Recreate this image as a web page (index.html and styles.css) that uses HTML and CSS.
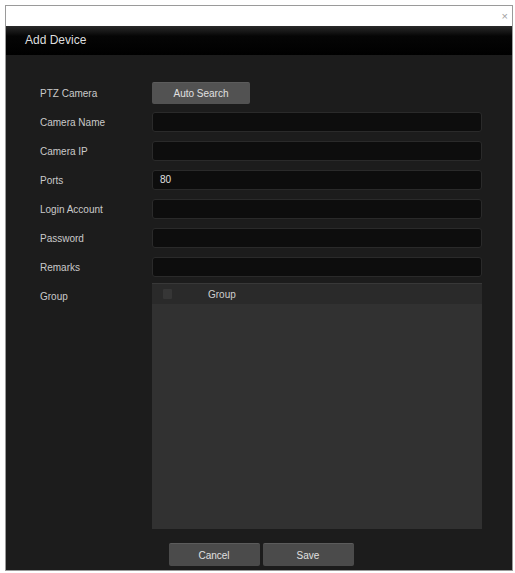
FILE: index.html
```html
<!DOCTYPE html>
<html>
<head>
<meta charset="utf-8">
<link rel="stylesheet" href="styles.css">
</head>
<body>
<div class="window">
  <div class="titlebar"><span class="close">×</span></div>
  <div class="header">Add Device</div>
  <div class="content">
    <div class="form">
      <div class="row row-btn">
        <span class="label">PTZ Camera</span>
        <button class="btn btn-search">Auto Search</button>
      </div>
      <div class="row"><span class="label">Camera Name</span><div class="input"></div></div>
      <div class="row"><span class="label">Camera IP</span><div class="input"></div></div>
      <div class="row"><span class="label">Ports</span><div class="input">80</div></div>
      <div class="row"><span class="label">Login Account</span><div class="input"></div></div>
      <div class="row"><span class="label">Password</span><div class="input"></div></div>
      <div class="row"><span class="label">Remarks</span><div class="input"></div></div>
      <div class="row row-tree">
        <span class="label label-tree">Group</span>
        <div class="tree">
          <div class="tree-head"><span class="check"></span><span class="tree-title">Group</span></div>
          <div class="tree-body"></div>
        </div>
      </div>
    </div>
    <div class="actions">
      <button class="btn btn-action">Cancel</button>
      <button class="btn btn-action">Save</button>
    </div>
  </div>
</div>
</body>
</html>
```
FILE: styles.css
```css
html, body {
  margin: 0;
  padding: 0;
  background: #ffffff;
  font-family: "Liberation Sans", Arial, sans-serif;
}
.window {
  position: relative;
  margin: 5px 0 0 5px;
  width: 506px;
  height: 564px;
  border: 1px solid #9a9a9a;
  display: flex;
  flex-direction: column;
  background: #1c1c1c;
}
.titlebar {
  height: 20px;
  background: #ffffff;
  display: flex;
  justify-content: flex-end;
  align-items: center;
  padding-right: 4px;
}
.close {
  color: #a0a0a0;
  font-size: 11px;
  line-height: 11px;
}
.header {
  height: 29px;
  background: linear-gradient(#2a2a2a 0%, #050505 35%, #000 100%);
  color: #dedede;
  font-size: 12px;
  line-height: 29px;
  padding-left: 19px;
}
.content {
  flex: 1;
  display: flex;
  flex-direction: column;
  padding: 27px 0 0 0;
}
.form {
  display: flex;
  flex-direction: column;
  gap: 9px;
  padding-left: 34px;
  padding-right: 30px;
}
.row {
  display: flex;
  align-items: center;
}
.label {
  width: 112px;
  flex: none;
  color: #cacaca;
  font-size: 10px;
}
.btn {
  border: none;
  border-top: 1px solid #5c5c5c;
  background: #4b4b4b;
  color: #e0e0e0;
  font-family: "Liberation Sans", Arial, sans-serif;
  font-size: 10px;
  border-radius: 2px;
  padding: 0;
}
.btn-search {
  width: 98px;
  height: 22px;
  background: #525252;
}
.row-btn {
  margin-bottom: -1px;
}
.input {
  flex: 1;
  height: 20px;
  box-sizing: border-box;
  background: #0d0d0d;
  border: 1px solid #2a2a2a;
  border-radius: 3px;
  color: #e0e0e0;
  font-size: 10px;
  line-height: 18px;
  padding-left: 7px;
}
.row-tree {
  align-items: flex-start;
  margin-top: -3px;
}
.label-tree {
  line-height: 20px;
  padding-top: 4px;
}
.tree {
  flex: 1;
  height: 245px;
  display: flex;
  flex-direction: column;
  background: #313131;
  border-top: 1px solid #383838;
}
.tree-head {
  height: 20px;
  background: #2a2a2a;
  display: flex;
  align-items: center;
  padding-left: 11px;
}
.check {
  width: 9px;
  height: 10px;
  background: #363636;
  border-radius: 1px;
}
.tree-title {
  margin-left: 36px;
  color: #cfcfcf;
  font-size: 10px;
}
.tree-body {
  flex: 1;
}
.actions {
  display: flex;
  justify-content: center;
  gap: 3px;
  margin-top: 14px;
  padding-left: 4px;
}
.btn-action {
  width: 91px;
  height: 23px;
}
```
